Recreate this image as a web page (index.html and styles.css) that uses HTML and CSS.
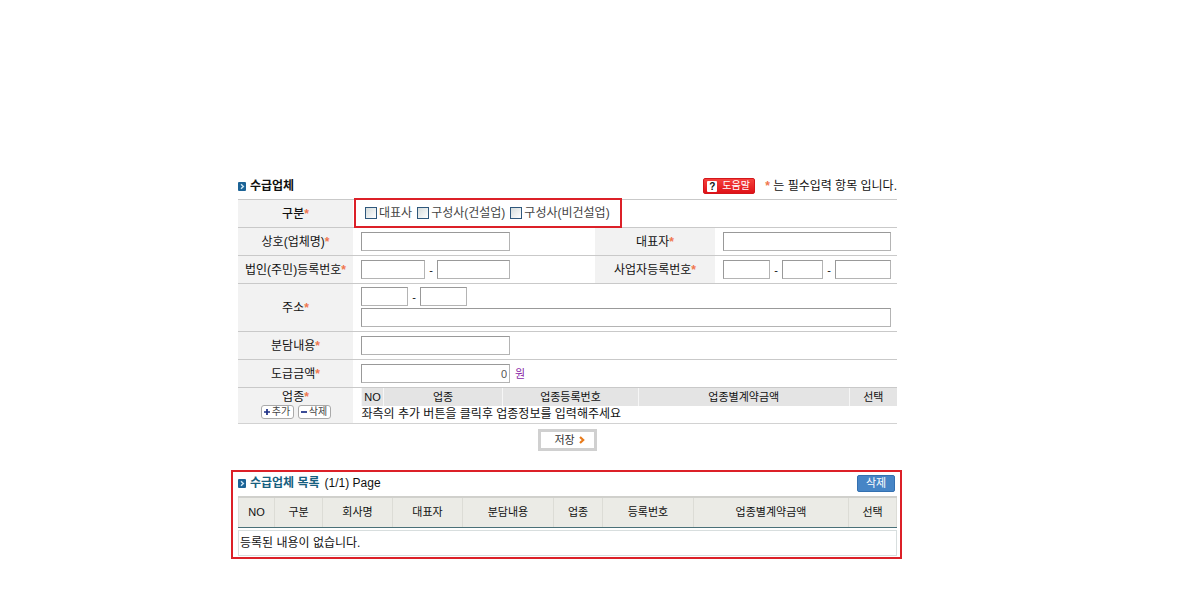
FILE: index.html
```html
<!DOCTYPE html>
<html lang="ko">
<head>
<meta charset="utf-8">
<title>수급업체</title>
<link rel="stylesheet" href="styles.css">
</head>
<body>
<main class="page">
  <form class="vendor">
    <header class="bar">
      <svg class="bullet" viewBox="0 0 8 9" aria-hidden="true"><rect width="8" height="9" rx="1" fill="#1c6396"/><path d="M3 2.2 5.4 4.5 3 6.8" fill="none" stroke="#cfe8f6" stroke-width="1.4"/></svg>
      <h1 class="title">수급업체</h1>
      <button type="button" class="help"><span class="help-mark">?</span>도움말</button>
      <p class="note"><span class="req">*</span> 는 필수입력 항목 입니다.</p>
    </header>

    <div class="row">
      <div class="label strong">구분<span class="req">*</span></div>
      <div class="checks">
        <label class="check"><input type="checkbox">대표사</label>
        <label class="check"><input type="checkbox">구성사(건설업)</label>
        <label class="check"><input type="checkbox">구성사(비건설업)</label>
      </div>
    </div>
    <div class="row">
      <label class="label" for="company">상호(업체명)<span class="req">*</span></label>
      <div class="field"><input class="box medium" id="company" type="text"></div>
      <label class="label second" for="ceo">대표자<span class="req">*</span></label>
      <div class="field right"><input class="box full" id="ceo" type="text"></div>
    </div>
    <div class="row">
      <label class="label" for="corp1">법인(주민)등록번호<span class="req">*</span></label>
      <div class="field"><input class="box w64" id="corp1" type="text"><span class="dash">-</span><input class="box w73" type="text" aria-label="등록번호 뒷자리"></div>
      <label class="label second" for="biz1">사업자등록번호<span class="req">*</span></label>
      <div class="field right"><input class="box w47" id="biz1" type="text"><span class="dash">-</span><input class="box w41" type="text" aria-label="사업자등록번호 2"><span class="dash">-</span><input class="box full" type="text" aria-label="사업자등록번호 3"></div>
    </div>
    <div class="row address">
      <label class="label" for="zip1">주소<span class="req">*</span></label>
      <div class="stack">
        <div class="line"><input class="box w47" id="zip1" type="text"><span class="dash">-</span><input class="box w47" type="text" aria-label="우편번호 2"></div>
        <div class="line"><input class="box full" type="text" aria-label="상세주소"></div>
      </div>
    </div>
    <div class="row">
      <label class="label" for="share">분담내용<span class="req">*</span></label>
      <div class="field"><input class="box medium" id="share" type="text"></div>
    </div>
    <div class="row">
      <label class="label" for="amount">도급금액<span class="req">*</span></label>
      <div class="field"><input class="box medium number" id="amount" type="text" value="0"><span class="won">원</span></div>
    </div>
    <div class="row kinds">
      <div class="label tall">
        <span class="kind-name">업종<span class="req">*</span></span>
        <div class="minis">
          <button type="button" class="mini"><svg class="sign" viewBox="0 0 7 7" aria-hidden="true"><path d="M3.5 0v7M0 3.5h7" stroke="#1c2f86" stroke-width="2"/></svg>추가</button>
          <button type="button" class="mini"><svg class="sign" viewBox="0 0 7 7" aria-hidden="true"><path d="M0 3.5h7" stroke="#1c2f86" stroke-width="2"/></svg>삭제</button>
        </div>
      </div>
      <table class="kind-table">
        <colgroup><col class="k1"><col class="k2"><col class="k3"><col><col class="k5"></colgroup>
        <thead><tr><th>NO</th><th>업종</th><th>업종등록번호</th><th>업종별계약금액</th><th>선택</th></tr></thead>
        <tbody><tr><td colspan="5">좌측의 추가 버튼을 클릭후 업종정보를 입력해주세요</td></tr></tbody>
      </table>
    </div>
    <div class="actions">
      <button type="button" class="save">저장<svg class="arrow" viewBox="0 0 6 8" aria-hidden="true"><path d="M1 1 4.2 4 1 7" fill="none" stroke="#e87a1a" stroke-width="2.2"/></svg></button>
    </div>
  </form>

  <section class="list">
    <header class="list-bar">
      <svg class="bullet" viewBox="0 0 8 9" aria-hidden="true"><rect width="8" height="9" rx="1" fill="#1c6396"/><path d="M3 2.2 5.4 4.5 3 6.8" fill="none" stroke="#cfe8f6" stroke-width="1.4"/></svg>
      <h2 class="title blue">수급업체 목록</h2>
      <span class="pages">(1/1) Page</span>
      <button type="button" class="delete">삭제</button>
    </header>
    <table class="list-table">
      <colgroup><col class="c1"><col class="c2"><col class="c3"><col class="c4"><col class="c5"><col class="c6"><col class="c7"><col><col class="c9"></colgroup>
      <thead><tr><th>NO</th><th>구분</th><th>회사명</th><th>대표자</th><th>분담내용</th><th>업종</th><th>등록번호</th><th>업종별계약금액</th><th>선택</th></tr></thead>
    </table>
    <p class="empty">등록된 내용이 없습니다.</p>
  </section>
</main>
</body>
</html>
```
FILE: styles.css
```css
* { box-sizing: border-box; }
body {
  margin: 0;
  background: #fff;
  color: #111;
  font: 11px/16px "Liberation Sans", "Noto Sans CJK KR", sans-serif;
}
h1, h2, p { margin: 0; }
button, input { font: inherit; color: inherit; }
button { padding: 0; white-space: nowrap; }
.page { margin: 0 293px 0 238px; padding-top: 173px; min-width: 659px; }

.bar { display: flex; align-items: center; height: 26px; }
.bullet { width: 8px; height: 9px; flex: none; }
.title { margin-left: 4px; font-size: 12px; font-weight: 700; }
.help {
  display: flex; align-items: center; gap: 5px;
  width: 52px; height: 16px; margin-left: auto; padding-left: 3px;
  border: 1px solid #d4161b; border-radius: 2px;
  background: linear-gradient(#f5413c, #df1218);
  color: #fff; font-size: 10px;
}
.help-mark {
  width: 10px; height: 11px; border-radius: 1px; background: #fff;
  color: #111; font-weight: 700; line-height: 11px; text-align: center;
}
.note { margin-left: 10px; font-size: 12px; }
.req { color: #f0764e; font-weight: 700; }

.row { display: flex; min-height: 28px; border-top: 1px solid #c9c9c9; }
.label {
  display: flex; flex: none; align-items: center; justify-content: center;
  width: 115px; background: #f2f2f2; font-size: 12px;
}
.strong { font-weight: 500; }
.second { width: 120px; }
.field { display: flex; flex: 1; align-items: center; padding-left: 8px; }
.right { flex: none; width: 182px; padding: 0 6px 0 8px; }
.box {
  height: 19px; padding: 0 2px; border: 1px solid #b4b4b4;
  border-top-color: #999; border-left-color: #999; border-radius: 0; background: #fff;
}
.medium { width: 149px; }
.full { flex: 1; min-width: 0; }
.w64 { width: 64px; }
.w73 { width: 73px; }
.w47 { width: 47px; }
.w41 { width: 41px; }
.dash { width: 12px; text-align: center; }
.number { text-align: right; color: #555; }
.won { margin-left: 5px; color: #8a1fa8; }

.checks {
  display: flex; align-items: center; gap: 5px;
  width: 268px; height: 30px; margin: -2px 0 -1px 1px; padding-left: 9px;
  border: 2px solid #dc2028; color: #444; font-size: 12px; z-index: 1;
}
.check { display: flex; align-items: center; gap: 2px; white-space: nowrap; }
.check input {
  appearance: none; width: 12px; height: 12px; margin: 0;
  border: 1px solid #2f587c; background: linear-gradient(135deg, #d5dcdc, #fff);
}
.address { min-height: 48px; }
.stack { display: flex; flex: 1; flex-direction: column; gap: 2px; padding: 3px 6px 4px 8px; }
.line { display: flex; align-items: center; }

.kinds { min-height: 37px; border-bottom: 1px solid #d2d2d2; }
.tall { flex-direction: column; justify-content: flex-start; padding-top: 1px; }
.minis { display: flex; gap: 4px; }
.mini {
  display: flex; align-items: center; justify-content: center; gap: 2px;
  width: 33px; height: 14px; border: 1px solid #aaa; border-radius: 3px;
  background: #fff; color: #444; font-size: 10px; line-height: 12px;
}
.sign { width: 6px; height: 6px; }
.kind-table {
  flex: 1; margin-left: 8px; table-layout: fixed;
  border-collapse: collapse;
}
.kind-table th {
  height: 18px; padding: 0; border-left: 1px solid #f6f6f6;
  background: #e4e4e4; font-weight: 400; line-height: 18px;
}
.kind-table td { padding: 0; font-size: 12px; line-height: 17px; }
.k1 { width: 22px; }
.k2 { width: 119px; }
.k3 { width: 136px; }
.k5 { width: 48px; }

.actions { display: flex; justify-content: center; padding: 5px 0 19px; }
.save {
  display: flex; align-items: center; justify-content: center; gap: 4px;
  width: 59px; height: 22px; padding-left: 4px;
  border: 3px solid #d0d0d0; background: #fff; color: #333;
}
.arrow { width: 6px; height: 8px; }

.list { margin: 0 -5px 0 -7px; padding: 0 3px 1px 5px; border: 2px solid #dc2028; }
.list-bar { display: flex; align-items: center; height: 24px; padding-bottom: 2px; }
.blue { color: #17607f; }
.pages { margin-left: 5px; font-size: 12px; }
.delete {
  width: 38px; height: 17px; margin: 0 2px 0 auto; border: 1px solid #3470b0;
  border-radius: 2px; background: #4685c6; color: #fff; line-height: 14px;
}
.list-table {
  width: 100%; table-layout: fixed; border-collapse: collapse;
}
.list-table th {
  height: 30px; padding: 0; border: 1px solid #dcdcd6;
  border-top: 2px solid #d0d0cc; border-bottom: 1px solid #4a7078;
  background: #ebebe6; font-weight: 400;
}
.c1 { width: 36px; }
.c2 { width: 48px; }
.c3, .c4 { width: 70px; }
.c5 { width: 91px; }
.c6 { width: 49px; }
.c7 { width: 91px; }
.c9 { width: 48px; }
.empty {
  margin-top: 2px; padding: 3px 1px 3px; border: 1px solid #d8dede;
  font-size: 12px; line-height: 18px;
}
```
